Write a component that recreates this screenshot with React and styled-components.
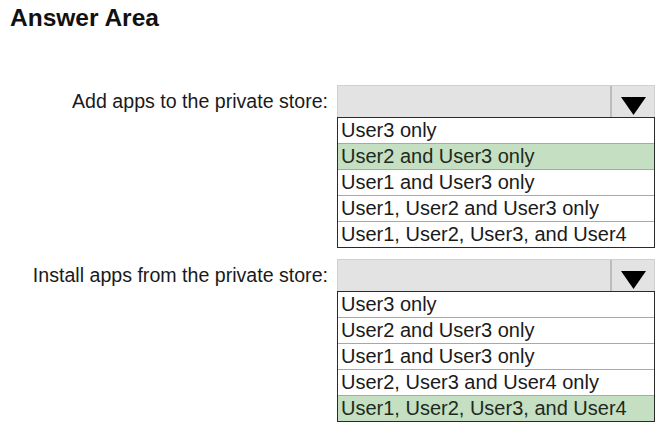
import React from "react";
import styled, { createGlobalStyle } from "styled-components";

const Global = createGlobalStyle`
  body {
    margin: 0;
    background: #fff;
    font-family: "Liberation Sans", Arial, sans-serif;
    color: #1a1a1a;
  }
`;

const Page = styled.div`
  width: 665px;
  height: 430px;
  padding: 4px 0 0 10px;
  box-sizing: border-box;
`;

const Title = styled.h1`
  margin: 0;
  font-size: 24.5px;
  line-height: 28px;
  font-weight: bold;
  color: #111;
`;

const Questions = styled.div`
  margin-top: 53px;
  display: flex;
  flex-direction: column;
  gap: 11px;
`;

const Row = styled.div`
  display: flex;
  align-items: flex-start;
  gap: 9px;
`;

const Label = styled.div`
  width: 318px;
  text-align: right;
  font-size: 19.6px;
  line-height: 32px;
  white-space: nowrap;
`;

const Dropdown = styled.div`
  width: 318px;
  display: flex;
  flex-direction: column;
`;

const Header = styled.div`
  height: 32px;
  box-sizing: border-box;
  display: flex;
  justify-content: flex-end;
  background: #e3e3e3;
  border: 1px solid #d0d0d0;
  border-bottom: none;
`;

const ArrowBox = styled.div`
  width: 42px;
  display: flex;
  align-items: flex-end;
  justify-content: center;
  padding-bottom: 2px;
  border-left: 2px solid #bcbcbc;
`;

const List = styled.div`
  border: 1px solid #2a2a2a;
  display: flex;
  flex-direction: column;
`;

const Option = styled.div`
  height: 25px;
  line-height: 25px;
  font-size: 20px;
  padding-left: 3px;
  white-space: nowrap;
  background: ${(p) => (p.$selected ? "#c5dfc2" : "#fff")};
  color: ${(p) => (p.$selected ? "#1e2a1e" : "#1a1a1a")};
  & + & {
    border-top: 1px solid #a8a8a8;
  }
`;

const Arrow = () => (
  <svg width="25" height="18" viewBox="0 0 25 18">
    <polygon points="0,0 25,0 12.5,18" fill="#000" />
  </svg>
);

const questions = [
  {
    label: "Add apps to the private store:",
    options: [
      "User3 only",
      "User2 and User3 only",
      "User1 and User3 only",
      "User1, User2 and User3 only",
      "User1, User2, User3, and User4",
    ],
    selected: 1,
  },
  {
    label: "Install apps from the private store:",
    options: [
      "User3 only",
      "User2 and User3 only",
      "User1 and User3 only",
      "User2, User3 and User4 only",
      "User1, User2, User3, and User4",
    ],
    selected: 4,
  },
];

export default function App() {
  return (
    <Page>
      <Global />
      <Title>Answer Area</Title>
      <Questions>
        {questions.map((q) => (
          <Row key={q.label}>
            <Label>{q.label}</Label>
            <Dropdown>
              <Header>
                <ArrowBox>
                  <Arrow />
                </ArrowBox>
              </Header>
              <List>
                {q.options.map((opt, i) => (
                  <Option key={opt} $selected={i === q.selected}>
                    {opt}
                  </Option>
                ))}
              </List>
            </Dropdown>
          </Row>
        ))}
      </Questions>
    </Page>
  );
}
